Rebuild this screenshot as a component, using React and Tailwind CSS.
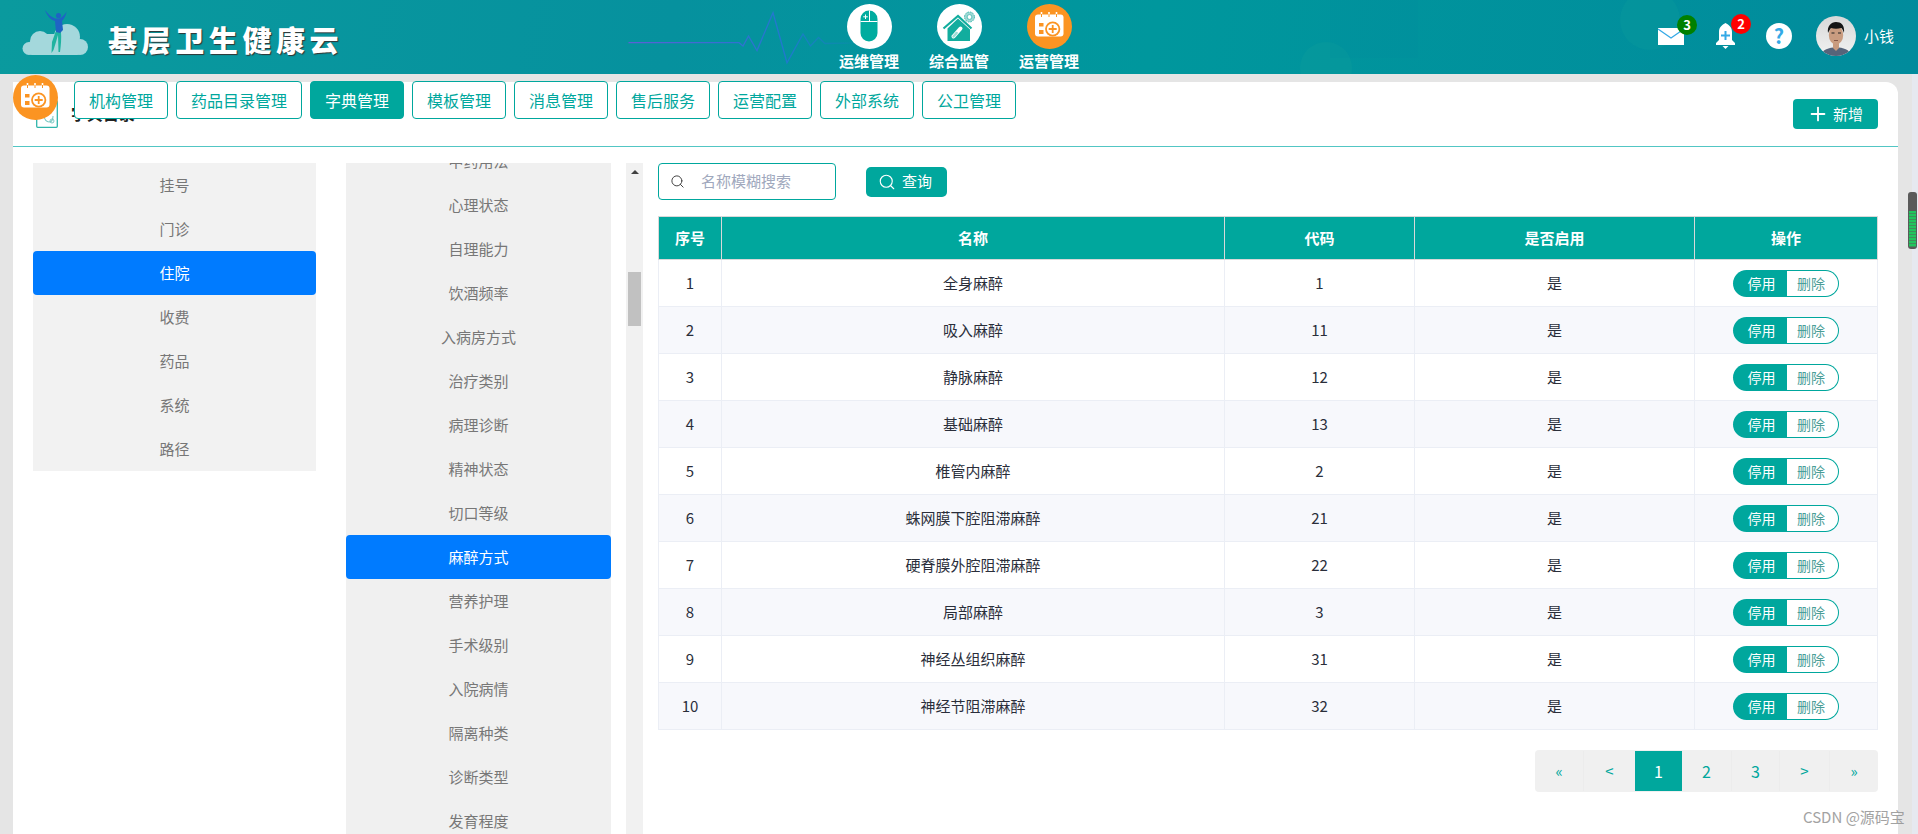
import React from "react";
import { Plus, Search } from "lucide-react";

const tabs = [
  ["机构管理", "w-[94px]"],
  ["药品目录管理", "w-[126px]"],
  ["字典管理", "w-[94px]"],
  ["模板管理", "w-[94px]"],
  ["消息管理", "w-[94px]"],
  ["售后服务", "w-[94px]"],
  ["运营配置", "w-[94px]"],
  ["外部系统", "w-[94px]"],
  ["公卫管理", "w-[94px]"],
];
const list1 = ["挂号", "门诊", "住院", "收费", "药品", "系统", "路径"];
const list2 = ["中药用法", "心理状态", "自理能力", "饮酒频率", "入病房方式", "治疗类别", "病理诊断", "精神状态", "切口等级", "麻醉方式", "营养护理", "手术级别", "入院病情", "隔离种类", "诊断类型", "发育程度"];
const rows = [
  ["1", "全身麻醉", "1"],
  ["2", "吸入麻醉", "11"],
  ["3", "静脉麻醉", "12"],
  ["4", "基础麻醉", "13"],
  ["5", "椎管内麻醉", "2"],
  ["6", "蛛网膜下腔阻滞麻醉", "21"],
  ["7", "硬脊膜外腔阻滞麻醉", "22"],
  ["8", "局部麻醉", "3"],
  ["9", "神经丛组织麻醉", "31"],
  ["10", "神经节阻滞麻醉", "32"],
];
const pages = [
  ["«", "w-[49px] text-[15px] border-r border-[#ececec]", false],
  ["<", "w-[51px] text-[15px]", false],
  ["1", "w-[47px] text-[16px]", true],
  ["2", "w-[50px] text-[16px] border-r border-[#ececec]", false],
  ["3", "w-[48px] text-[16px] border-r border-[#ececec]", false],
  [">", "w-[50px] text-[15px] border-r border-[#ececec]", false],
  ["»", "w-[48px] text-[15px]", false],
];

function CalendarIcon() {
  return (
    <svg width="45" height="45" viewBox="0 0 45 45">
      <circle cx="22.5" cy="22.5" r="22.5" fill="#fb9422" />
      <rect x="8" y="10.5" width="28.5" height="22" rx="3" fill="#fff" />
      <path d="M14.5 8v5M22 8v5M29.5 8v5" stroke="#fff" strokeWidth="1.6" />
      <path d="M14.5 10v3M22 10v3M29.5 10v3" stroke="#fb9422" strokeWidth="1" />
      <rect x="12" y="19" width="4.5" height="3.5" fill="#fb9422" />
      <rect x="12" y="26" width="4.5" height="4" fill="#fb9422" />
      <circle cx="25.7" cy="25" r="7.6" fill="#fb9422" />
      <circle cx="25.7" cy="25" r="5.8" fill="#fff" />
      <path d="M25.7 21v8M21.7 25h8" stroke="#fb9422" strokeWidth="1.8" />
    </svg>
  );
}
function MouseIcon() {
  return (
    <svg width="45" height="45" viewBox="0 0 45 45">
      <circle cx="22.5" cy="22.5" r="22.5" fill="#fff" />
      <rect x="13.5" y="6.5" width="17" height="31" rx="8.5" fill="#00ac9f" />
      <path d="M22.5 6.5v11M13.5 17.5h17" stroke="#fff" strokeWidth="1" />
      <path d="M18.5 10.5v4.5M16.2 12.8h4.6" stroke="#fff" strokeWidth="1" />
    </svg>
  );
}
function HouseIcon() {
  return (
    <svg width="45" height="45" viewBox="0 0 45 45">
      <circle cx="22.5" cy="22.5" r="22.5" fill="#fff" />
      <path d="M10.5 24.5L21 14.5l12 11V37H10.5z" fill="#12ad9e" />
      <path d="M6.5 24.5L21 12l13.5 12.5" fill="none" stroke="#12ad9e" strokeWidth="2.2" />
      <path d="M16.5 32.5l7-8" stroke="#fff" strokeWidth="4" strokeLinecap="round" />
      <path d="M16.5 32.5l3.2-3.6" stroke="#9fdcd5" strokeWidth="2.4" strokeLinecap="round" />
      <circle cx="32.5" cy="13" r="5" fill="#9fd8d4" stroke="#3eb8ae" strokeWidth="1" strokeDasharray="1.6 1" />
      <circle cx="32.5" cy="13" r="2.4" fill="#fff" stroke="#3eb8ae" strokeWidth="0.8" />
    </svg>
  );
}
function Logo() {
  return (
    <svg width="70" height="50" viewBox="0 0 70 50" className="shrink-0">
      <g fill="#a4d8dc">
        <circle cx="9" cy="40.500" r="6.500" />
        <circle cx="20" cy="33" r="10" />
        <circle cx="47" cy="29" r="13" />
        <circle cx="60" cy="39" r="8" />
        <rect x="9" y="33" width="51" height="14" rx="3" />
        <rect x="20" y="26" width="27" height="12" />
      </g>
      <path d="M35.500 24L32 34l-.5 11 2-3L36 34l2-7 .5 17H40c1-7 1.500-14 1-20z" fill="#1fb3a0" />
      <path d="M25 2c2 6 6 10 10 11l1 11 4 1 3-3-1-9c2-2 4-6 4.700-9.300C44 7 41.500 10 39 10.500h-4C31 9 28 6 25 2z" fill="#1f63c4" />
      <circle cx="38.500" cy="7.500" r="2.600" fill="#1f63c4" />
    </svg>
  );
}
function Avatar() {
  return (
    <svg width="40" height="40" viewBox="0 0 40 40" className="rounded-full shrink-0">
      <defs>
        <linearGradient id="avbg" x1="0" y1="0" x2="0" y2="1">
          <stop offset="0" stopColor="#d8d8d8" />
          <stop offset="1" stopColor="#f2f2f2" />
        </linearGradient>
      </defs>
      <rect width="40" height="40" fill="url(#avbg)" />
      <path d="M5 40c1-7 8-8 15-9 7 1 14 2 15 9z" fill="#56647a" />
      <path d="M17 27h6v5l-3 3-3-3z" fill="#c89a7e" />
      <ellipse cx="20" cy="19" rx="7.2" ry="9.5" fill="#c99c80" />
      <path d="M12 17c-1-7 3-11 8-11s9 3 8 11c-1-3-2-5-3-5-3 1-7 1-10 0-1 1-2 3-3 5z" fill="#151515" />
      <path d="M15.5 17h3M22 17h3" stroke="#222" strokeWidth="1" />
      <path d="M18 24.5h4" stroke="#7c4f3f" strokeWidth="0.9" />
    </svg>
  );
}

function Header() {
  return (
    <header className="relative h-[74px] flex items-center overflow-hidden bg-[linear-gradient(100deg,#0a9a9e_0%,#06919e_35%,#00979d_60%,#018b9c_100%)]">
      <div className="absolute left-[1300px] top-[42px] w-[52px] h-[52px] rounded-full bg-[#0fa09a]/30" />
      <div className="absolute left-[1620px] top-[-10px] w-[60px] h-[60px] rounded-full bg-[#0fa09a]/25" />
      <div className="absolute left-[1330px] top-0 w-[88px] h-[58px] bg-[#00809c]/10" />
      <svg className="absolute left-[620px] top-0" width="500" height="74" viewBox="0 0 500 74">
        <defs>
          <linearGradient id="ecg" x1="0" y1="0" x2="1" y2="0">
            <stop offset="0" stopColor="#5d5fd6" />
            <stop offset="0.7" stopColor="#1f78cf" />
            <stop offset="1" stopColor="#1f78cf" stopOpacity="0.1" />
          </linearGradient>
          <linearGradient id="gr" x1="0" y1="0" x2="1" y2="0">
            <stop offset="0" stopColor="#14c45a" stopOpacity="0.1" />
            <stop offset="1" stopColor="#0fd64a" />
          </linearGradient>
        </defs>
        <path d="M8.5 42.7H119l4 3.3 5.500-10 8.500 14.500L153 12.700 167 62.700l16-28.700 7.500 12 8-8.500 6.500 6 28 -.5" fill="none" stroke="url(#ecg)" strokeWidth="1.3" />
        <path d="M265 43.500H420" stroke="url(#gr)" strokeWidth="1.300" />
      </svg>

      <div className="relative w-[824px] shrink-0 flex items-start h-full pl-[20px] pt-[8px]">
        <Logo />
        <h1 className="ml-[18px] mt-[13px] text-[29px] leading-[36px] font-black tracking-[4.6px] text-white [text-shadow:1px_1px_1px_#333]">基层卫生健康云</h1>
      </div>

      <nav className="relative flex h-full">
        {[["运维管理", <MouseIcon />], ["综合监管", <HouseIcon />], ["运营管理", <CalendarIcon />]].map(([t, icon]) => (
          <div key={t} className="w-[90px] flex flex-col items-center pt-[4px]">
            {icon}
            <span className="mt-[1px] text-[15px] leading-[22px] font-bold text-white">{t}</span>
          </div>
        ))}
      </nav>

      <div className="relative ml-auto pr-[24px] pb-[2px] flex items-center text-white">
        <div className="relative w-[26px] h-[17px] mr-[32px]">
          <svg width="26" height="17" viewBox="0 0 26 17">
            <rect width="26" height="17" fill="#fff" />
            <path d="M0 1l13 9 13-9" fill="none" stroke="#34a9e6" strokeWidth="1.3" />
          </svg>
          <span className="absolute left-[19px] top-[-13px] w-[20px] h-[20px] rounded-full bg-[#008000] flex items-center justify-center text-[13px] font-bold">3</span>
        </div>
        <div className="relative w-[19px] h-[26px] mr-[31px]">
          <svg width="19" height="26" viewBox="0 0 19 26">
            <path d="M9.500 0C6 2 3 4 3 9v8l-3 3v2h19v-2l-3-3V9c0-5-3-7-6.500-9z" fill="#fff" />
            <path d="M6.500 23h6L9.500 26z" fill="#fff" />
            <path d="M9.500 8v9M5 12.500h9" stroke="#34a9e6" strokeWidth="2" />
          </svg>
          <span className="absolute left-[15px] top-[-9px] w-[20px] h-[20px] rounded-full bg-[#ff0000] flex items-center justify-center text-[13px] font-bold">2</span>
        </div>
        <div className="w-[26px] h-[26px] mr-[24px] rounded-full bg-white flex items-center justify-center text-[20px] leading-none font-bold text-[#34a9e6]">?</div>
        <Avatar />
        <span className="ml-[8px] text-[15px] leading-[20px]">小钱</span>
      </div>
    </header>
  );
}

function ActionButtons() {
  return (
    <div className="mx-auto w-[106px] h-[27px] flex text-[14px]">
      <span className="w-[54px] rounded-l-full bg-[#00a79d] text-white flex items-center justify-center pl-[3px]">停用</span>
      <span className="w-[52px] rounded-r-full border border-l-0 border-[#00a79d] bg-white text-[#4a9e98] flex items-center justify-center pr-[3px]">删除</span>
    </div>
  );
}

function DataTable() {
  return (
    <table className="w-[1219px] table-fixed border-collapse text-[15px] text-[#2a2e3a]">
      <colgroup>
        <col className="w-[63px]" />
        <col className="w-[503px]" />
        <col className="w-[190px]" />
        <col className="w-[280px]" />
        <col className="w-[183px]" />
      </colgroup>
      <thead>
        <tr className="h-[43px] bg-[#00a79d] text-white">
          {["序号", "名称", "代码", "是否启用", "操作"].map((h) => (
            <th key={h} className="border border-[#d9d9d9] font-bold text-center">{h}</th>
          ))}
        </tr>
      </thead>
      <tbody>
        {rows.map((r, i) => (
          <tr key={r[0]} className={i % 2 ? "h-[47px] bg-[#f7f8fc]" : "h-[47px] bg-white"}>
            <td className="border border-[#ebeef5] text-center">{r[0]}</td>
            <td className="border border-[#ebeef5] text-center">{r[1]}</td>
            <td className="border border-[#ebeef5] text-center">{r[2]}</td>
            <td className="border border-[#ebeef5] text-center">是</td>
            <td className="border border-[#ebeef5]"><ActionButtons /></td>
          </tr>
        ))}
      </tbody>
    </table>
  );
}

export default function App() {
  return (
    <div className="relative w-[1918px] h-[834px] overflow-hidden bg-[#e5e5e5] font-['Noto_Sans_CJK_SC','Liberation_Sans',sans-serif]">
      <Header />

      <main className="mt-[8px] ml-[13px] w-[1885px] h-[752px] bg-white rounded-tr-[12px] overflow-hidden">
        <div className="h-[65px] border-b border-[#52c6c4] flex items-start pt-[17px] pl-[23px] pr-[20px]">
          <svg width="22" height="28" viewBox="0 0 22 28" className="mt-[1px] shrink-0">
            <rect x="0.700" y="0.700" width="20.600" height="26.600" rx="1" fill="#fff" stroke="#2fb5ab" strokeWidth="1.300" />
            <path d="M8 15c0 5 3 7 5 7s4-2 4-6" fill="none" stroke="#7cc9c4" strokeWidth="1.100" />
            <circle cx="16" cy="21" r="2" fill="none" stroke="#7cc9c4" strokeWidth="1" />
          </svg>
          <span className="ml-[13px] mt-[3px] text-[16px] leading-[22px] font-bold text-[#222]">字典目录</span>
          <button className="ml-auto w-[85px] h-[30px] rounded-[4px] bg-[#00a79d] text-white text-[15px] flex items-center justify-start pl-[14px] gap-[4px]">
            <Plus size={22} strokeWidth={2} />
            新增
          </button>
        </div>

        <div className="flex items-start pt-[16px] pl-[20px]">
          <ul className="w-[283px] shrink-0 bg-[#f2f2f2] text-[15px] text-[#777]">
            {list1.map((t) => (
              <li key={t} className={t === "住院" ? "h-[44px] flex items-center justify-center rounded-[4px] bg-[#007bff] text-white" : "h-[44px] flex items-center justify-center"}>{t}</li>
            ))}
          </ul>

          <div className="ml-[30px] w-[265px] h-[671px] shrink-0 overflow-hidden bg-[#f0f0f0] text-[15px] text-[#777]">
            <ul className="-mt-[24px]">
              {list2.map((t) => (
                <li key={t} className={t === "麻醉方式" ? "h-[44px] flex items-center justify-center rounded-[4px] bg-[#007bff] text-white" : "h-[44px] flex items-center justify-center"}>{t}</li>
              ))}
            </ul>
          </div>

          <div className="ml-[15px] w-[17px] h-[671px] shrink-0 bg-[#f1f1f1] pt-[7px] flex flex-col items-center">
            <div className="w-0 h-0 border-x-[4px] border-x-transparent border-b-[4px] border-b-[#404040]" />
            <div className="mt-[98px] w-[13px] h-[54px] bg-[#c1c1c1]" />
          </div>

          <section className="ml-[15px] w-[1220px] shrink-0">
            <div className="flex items-center h-[37px]">
              <div className="w-[178px] h-[37px] rounded-[4px] border border-[#00a79d] flex items-center pl-[11px] text-[15px] text-[#a0a8bd]">
                <Search size={15} strokeWidth={1.6} className="text-[#444]" />
                <span className="ml-[16px]">名称模糊搜索</span>
              </div>
              <button className="ml-[30px] w-[81px] h-[30px] rounded-[5px] bg-[#00a79d] text-white text-[15px] flex items-center justify-start pl-[12px] gap-[6px]">
                <Search size={18} strokeWidth={1.5} />
                查询
              </button>
            </div>

            <div className="mt-[16px]">
              <DataTable />
            </div>

            <div className="mt-[20px] ml-auto w-[343px] h-[42px] rounded-[4px] bg-[#f0f0f0] flex items-center text-[#00a79d]">
              {pages.map(([t, cls, active]) => (
                <span key={t} className={`${cls} flex items-center justify-center ${active ? "h-[40px] bg-[#00a79d] text-white" : "h-[40px]"}`}>{t}</span>
              ))}
            </div>
          </section>
        </div>
      </main>

      {/* 顶部悬浮页签 */}
      <div className="absolute left-[13px] top-[75px]">
        <CalendarIcon />
      </div>
      <div className="absolute left-[74px] top-[81px] flex gap-[8px]">
        {tabs.map(([t, w]) => (
          <div key={t} className={`${w} h-[38px] rounded-[4px] border border-[#00a79d] flex items-center justify-center text-[16px] ${t === "字典管理" ? "bg-[#00a79d] text-white" : "bg-white text-[#00a79d]"}`}>{t}</div>
        ))}
      </div>

      {/* 页面滚动条 */}
      <div className="absolute right-0 top-[74px] w-[6px] h-[760px] bg-[#e6e9f0]" />
      <div className="absolute right-[1px] top-[192px] w-[9px] h-[57px] rounded-[3px] bg-[#5a5a5a] flex flex-col justify-end p-[1px] pb-[2px]">
        <div className="h-[36px] bg-[repeating-linear-gradient(180deg,#22c55e_0px,#22c55e_2px,#3f8f5c_2px,#3f8f5c_3px)]" />
      </div>

      <div className="absolute left-[1803px] top-[808px] text-[15px] leading-[18px] text-[#8c8c8c] opacity-80">CSDN @源码宝</div>
    </div>
  );
}
